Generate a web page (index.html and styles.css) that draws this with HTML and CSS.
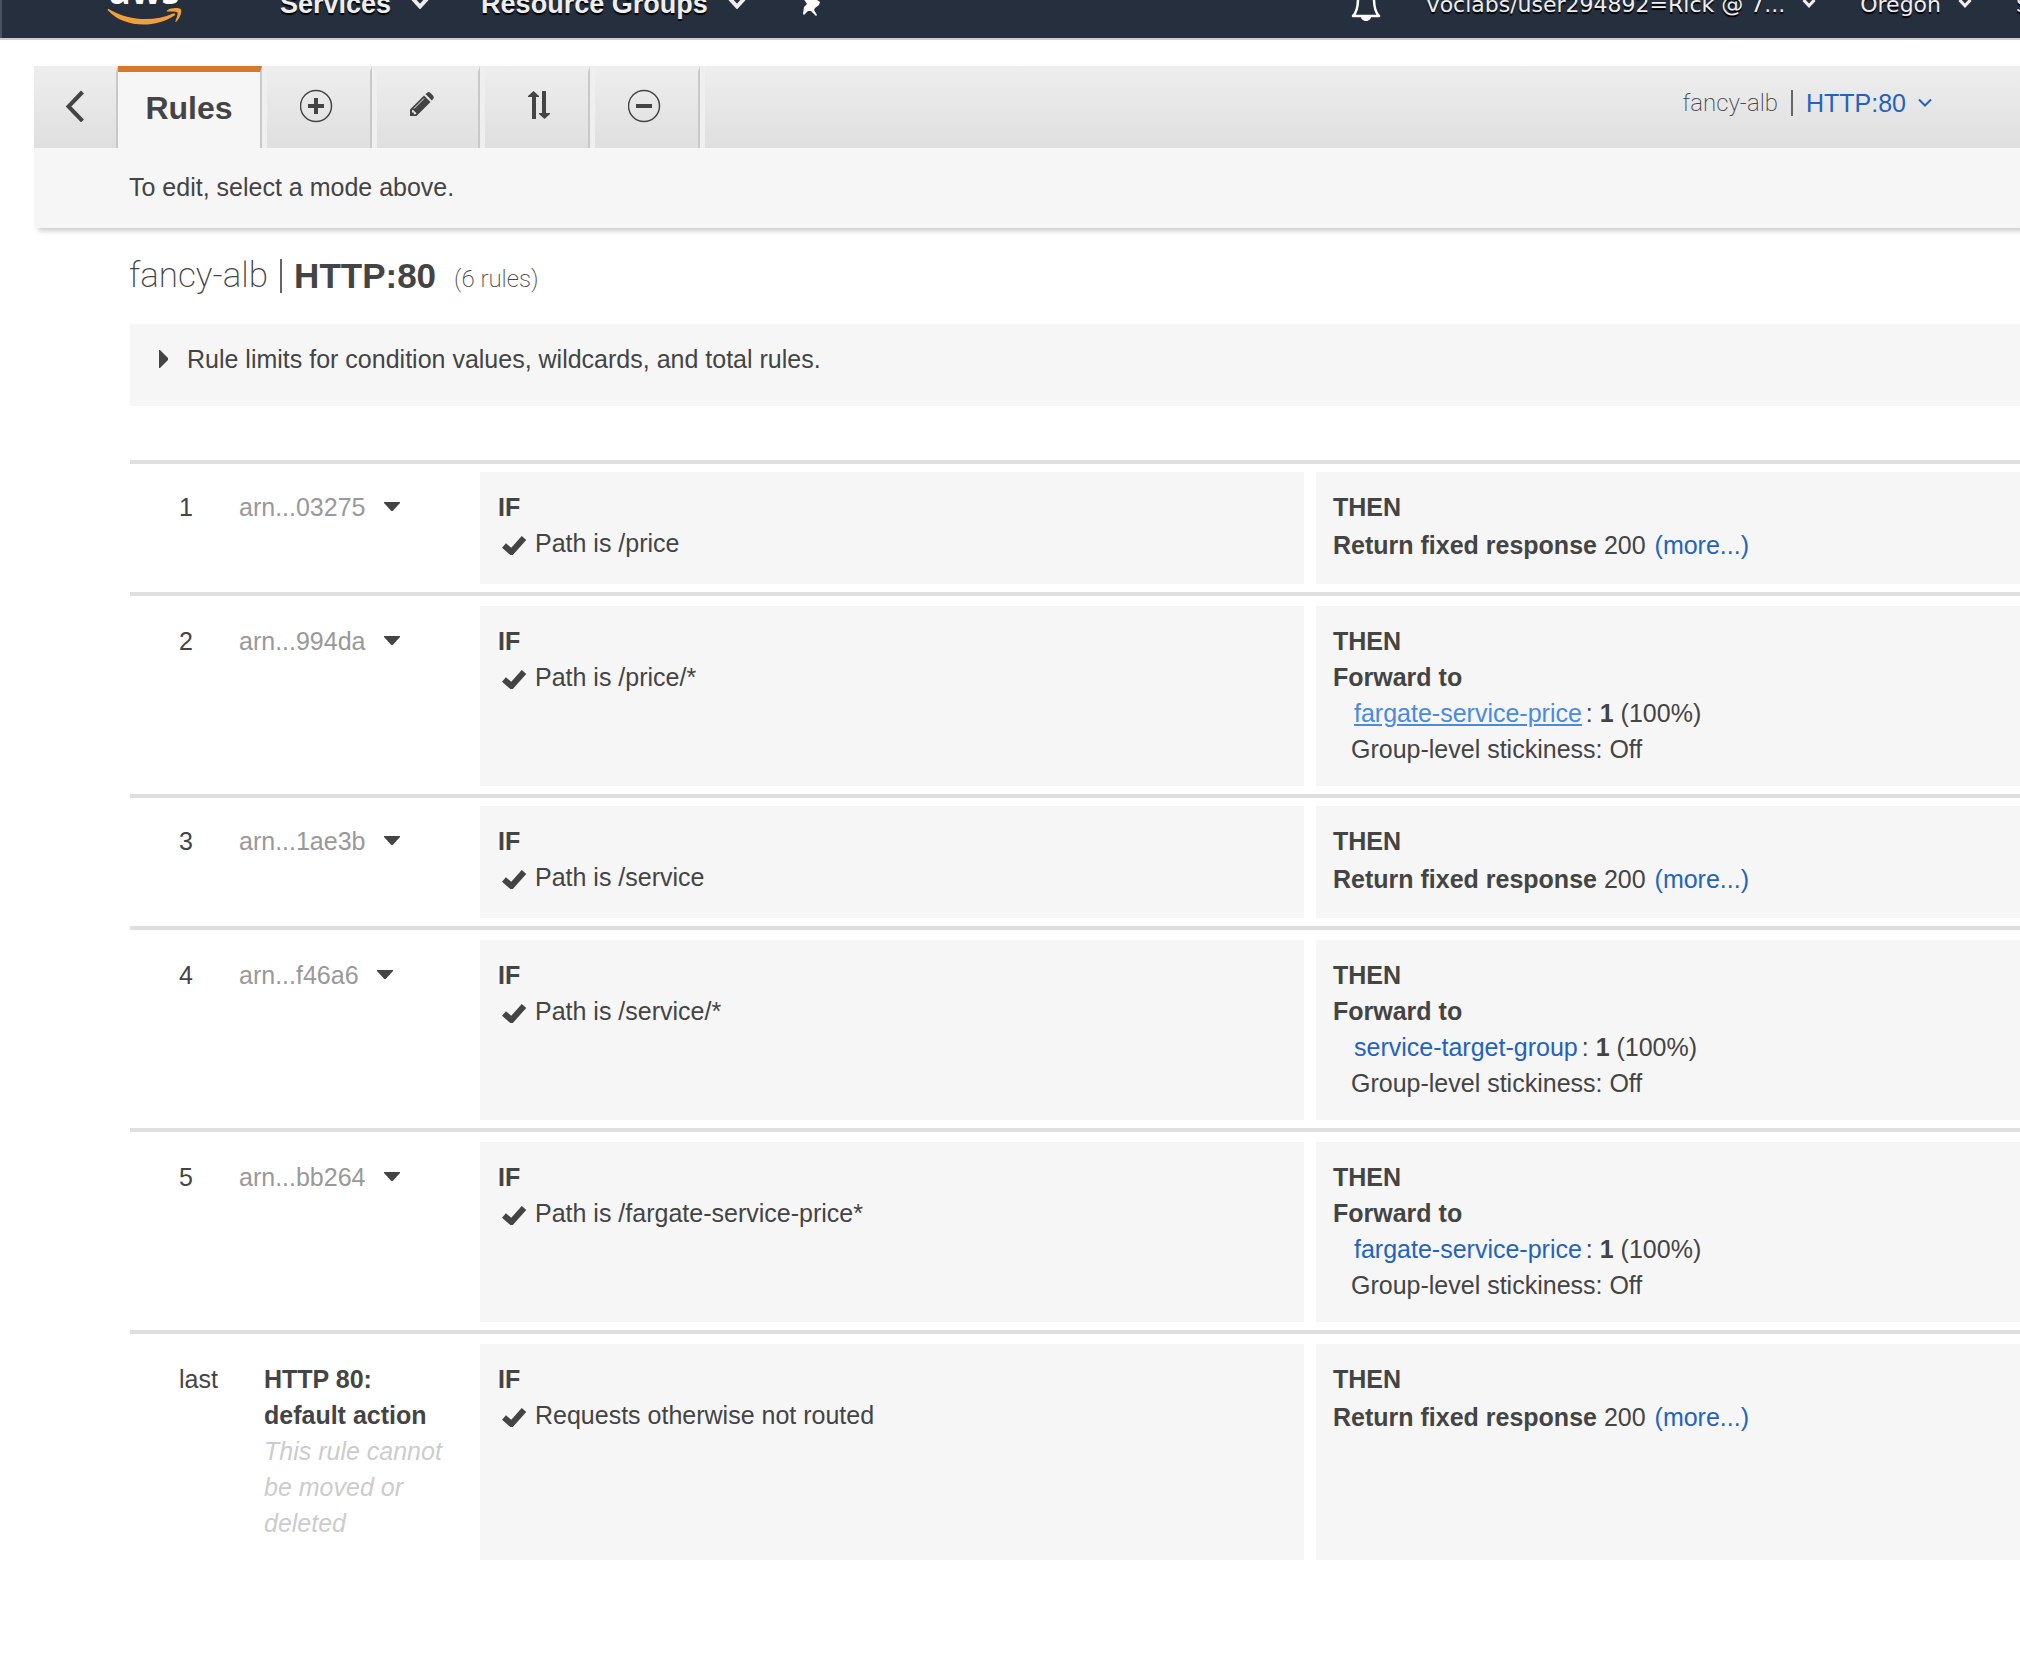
FILE: index.html
```html
<!DOCTYPE html>
<html lang="en">
<head>
<meta charset="utf-8">
<meta name="viewport" content="width=device-width, initial-scale=1">
<title>Rules: fancy-alb HTTP:80</title>
<link rel="stylesheet" href="styles.css">
</head>
<body>
<svg width="0" height="0" class="symbols" aria-hidden="true">
  <symbol id="check" viewBox="0 0 24 20"><path d="M2 10.500 9.500 17 22 3" fill="none" stroke="currentColor" stroke-width="6" stroke-linejoin="miter"/></symbol>
  <symbol id="caret" viewBox="0 0 16 10"><path d="M0 0H16V1L8.700 9H7.300L0 1Z" fill="currentColor"/></symbol>
  <symbol id="nav-caret" viewBox="0 0 18 12"><path d="M2 2 9 9.500 16 2" fill="none" stroke="currentColor" stroke-width="4"/></symbol>
</svg>

<header class="topbar">
  <nav class="topnav" aria-label="Console">
    <a class="logo" href="#" aria-label="AWS home">
      <svg width="76" height="52" viewBox="0 0 76 52">
        <text class="logo-text" x="2" y="31">aws</text>
        <path d="M1 37.500C0 36.500 1 35.500 2.500 36.500C23 48.500 48 48.500 66 40.500C68 40 69 41.500 67.500 42.500C48 55.500 17 55 1 37.500Z" fill="#f19f3b"/>
        <path d="M60 37.500C64 34.500 72 34.500 74 36.500C75 39 73 45 69.500 48.500C68.500 49.500 68 49 68.500 48C70 44.500 71 40.500 70.500 39.500C69 38 64 38.500 61 38.500C59.500 38.500 59 38.300 60 37.500Z" fill="#f19f3b"/>
      </svg>
    </a>
    <button class="nav-item nav-main" type="button">Services <svg width="18" height="12"><use href="#nav-caret"/></svg></button>
    <button class="nav-item nav-main" type="button">Resource Groups <svg width="18" height="12"><use href="#nav-caret"/></svg></button>
    <button class="nav-item nav-pin" type="button" aria-label="Pin shortcuts">
      <svg width="26" height="28" viewBox="0 0 26 28"><path d="M5 3 17 1 16 9 22 13 21 16 17 19 16 21 19 26 18 27 13 22 10 22 6 26 5 25 6 18 9 15 5 9Z" fill="#fff"/></svg>
    </button>
    <div class="nav-right">
      <button class="nav-item nav-bell" type="button" aria-label="Notifications">
        <svg width="30" height="36" viewBox="0 0 30 36"><path d="M2 31C6 27 7 22 7 14C7 7 10 4 15 4S23 7 23 14C23 22 24 27 28 31Z" fill="none" stroke="#fff" stroke-width="2.500" stroke-linejoin="round"/><path d="M10 32H20C20 34 17.500 36 15 36S10 34 10 32Z" fill="#fff"/></svg>
      </button>
      <button class="nav-item nav-user" type="button">voclabs/user294892=Rick @ 7... <svg width="14" height="10"><use href="#nav-caret"/></svg></button>
      <button class="nav-item nav-user" type="button">Oregon <svg width="14" height="10"><use href="#nav-caret"/></svg></button>
      <button class="nav-item nav-user nav-last" type="button">Support</button>
    </div>
  </nav>
</header>

<div class="modebar">
  <div class="tabs">
    <button class="tab tab-back" type="button" aria-label="Back">
      <svg width="20" height="32" viewBox="0 0 20 32"><path d="M17.500 2 3.500 16.500 17.500 31" fill="none" stroke="currentColor" stroke-width="4"/></svg>
    </button>
    <button class="tab tab-active" type="button">Rules</button>
    <button class="tab" type="button" aria-label="Add rule">
      <svg width="38" height="34" viewBox="0 0 38 34"><circle cx="16" cy="17" r="15.500" fill="none" stroke="currentColor" stroke-width="1.500"/><path d="M8 17H24M16 9V25" stroke="currentColor" stroke-width="4"/></svg>
    </button>
    <button class="tab tab-edit" type="button" aria-label="Edit rules">
      <svg width="38" height="34" viewBox="0 0 38 34"><path d="M1 27V20.500L15 6.500 21.500 13 7.500 27Z" fill="currentColor"/><path d="M16.500 5 18.500 3.500Q20 2.500 21.500 4L24 6.500Q25.500 8.500 24.500 9.500L22.800 11.500Z" fill="currentColor"/><path d="M5 19.500 15 9.500" stroke="#eee" stroke-width="1"/><path d="M3 21.500V23.500H4.800V25.200H6.600L7.500 24.300 3.800 20.700Z" fill="#eee"/></svg>
    </button>
    <button class="tab" type="button" aria-label="Reorder rules">
      <svg width="38" height="34" viewBox="0 0 38 34"><path d="M14 30V8H10V7L15.500 2 21 7V8H18V30ZM24 2V24H21V25L26.500 30 32 25V24H28V2Z" fill="currentColor"/></svg>
    </button>
    <button class="tab" type="button" aria-label="Delete rules">
      <svg width="38" height="34" viewBox="0 0 38 34"><circle cx="16" cy="17" r="15.500" fill="none" stroke="currentColor" stroke-width="1.500"/><path d="M8 17H24" stroke="currentColor" stroke-width="4"/></svg>
    </button>
    <div class="listener">
      <span class="thin">fancy-alb</span>
      <span class="bar"></span>
      <a href="#">HTTP:80 <svg width="14" height="10" viewBox="0 0 14 10"><path d="M1 1.500 7 7.500 13 1.500" fill="none" stroke="currentColor" stroke-width="2"/></svg></a>
    </div>
  </div>
  <p class="hint">To edit, select a mode above.</p>
</div>

<main class="content">
  <h1 class="title"><span class="thin">fancy-alb</span><span class="bar"></span><strong>HTTP:80</strong><small class="thin">(6 rules)</small></h1>

  <details class="limits">
    <summary><svg width="10" height="18" viewBox="0 0 10 18"><path d="M0 0H1L9 8V10L1 18H0Z" fill="currentColor"/></svg>Rule limits for condition values, wildcards, and total rules.</summary>
  </details>

  <ol class="rules">
    <li class="rule">
      <div class="id"><span class="num">1</span><button class="arn" type="button">arn...03275 <svg width="16" height="10"><use href="#caret"/></svg></button></div>
      <div class="cell"><b>IF</b><p class="cond"><svg width="24" height="20"><use href="#check"/></svg>Path is /price</p></div>
      <div class="cell then"><b>THEN</b><p class="fixed"><b>Return fixed response</b> 200 <a href="#">(more...)</a></p></div>
    </li>
    <li class="rule forward">
      <div class="id"><span class="num">2</span><button class="arn" type="button">arn...994da <svg width="16" height="10"><use href="#caret"/></svg></button></div>
      <div class="cell"><b>IF</b><p class="cond"><svg width="24" height="20"><use href="#check"/></svg>Path is /price/*</p></div>
      <div class="cell then"><b>THEN</b><p><b>Forward to</b></p><p class="target"><a class="hovered" href="#">fargate-service-price</a><span>: <b>1</b> (100%)</span></p><p class="sticky">Group-level stickiness: Off</p></div>
    </li>
    <li class="rule">
      <div class="id"><span class="num">3</span><button class="arn" type="button">arn...1ae3b <svg width="16" height="10"><use href="#caret"/></svg></button></div>
      <div class="cell"><b>IF</b><p class="cond"><svg width="24" height="20"><use href="#check"/></svg>Path is /service</p></div>
      <div class="cell then"><b>THEN</b><p class="fixed"><b>Return fixed response</b> 200 <a href="#">(more...)</a></p></div>
    </li>
    <li class="rule forward">
      <div class="id"><span class="num">4</span><button class="arn" type="button">arn...f46a6 <svg width="16" height="10"><use href="#caret"/></svg></button></div>
      <div class="cell"><b>IF</b><p class="cond"><svg width="24" height="20"><use href="#check"/></svg>Path is /service/*</p></div>
      <div class="cell then"><b>THEN</b><p><b>Forward to</b></p><p class="target"><a href="#">service-target-group</a><span>: <b>1</b> (100%)</span></p><p class="sticky">Group-level stickiness: Off</p></div>
    </li>
    <li class="rule forward">
      <div class="id"><span class="num">5</span><button class="arn" type="button">arn...bb264 <svg width="16" height="10"><use href="#caret"/></svg></button></div>
      <div class="cell"><b>IF</b><p class="cond"><svg width="24" height="20"><use href="#check"/></svg>Path is /fargate-service-price*</p></div>
      <div class="cell then"><b>THEN</b><p><b>Forward to</b></p><p class="target"><a href="#">fargate-service-price</a><span>: <b>1</b> (100%)</span></p><p class="sticky">Group-level stickiness: Off</p></div>
    </li>
    <li class="rule forward">
      <div class="id"><span class="num">last</span><div class="default"><b>HTTP 80: default action</b><p class="note">This rule cannot be moved or deleted</p></div></div>
      <div class="cell"><b>IF</b><p class="cond"><svg width="24" height="20"><use href="#check"/></svg>Requests otherwise not routed</p></div>
      <div class="cell then"><b>THEN</b><p class="fixed"><b>Return fixed response</b> 200 <a href="#">(more...)</a></p></div>
    </li>
  </ol>
</main>
</body>
</html>
```
FILE: styles.css
```css
* { box-sizing: border-box; }
body {
  margin: 0;
  background: #fff;
  color: #444;
  font: 25px/36px "Liberation Sans", Arial, sans-serif;
  overflow-x: hidden;
}
p { margin: 0; }
a { color: #2463bd; text-decoration: none; }
button {
  margin: 0;
  padding: 0;
  border: 0;
  background: none;
  color: inherit;
  font: inherit;
  cursor: pointer;
}
.symbols { position: absolute; }
.thin { font-family: Roboto, "Liberation Sans", sans-serif; font-weight: 200; color: #444; }

/* Console bar, scrolled partly out of view */
.topbar {
  height: 40px;
  overflow: hidden;
  background: #262f3e;
  border-bottom: 2px solid #ccc;
}
.topnav {
  display: flex;
  align-items: center;
  height: 76px;
  margin-top: -34px;
  padding-left: 105px;
  border-left: 2px solid #4a5361;
  white-space: nowrap;
}
.logo { display: flex; margin-right: 97px; padding-bottom: 10px; }
.logo-text { font: 700 36px "Open Sans", sans-serif; fill: #fff; }
.nav-item {
  display: flex;
  align-items: center;
  color: #eee;
  text-shadow: 0 2px 1px #000;
}
.nav-item svg { margin-bottom: 2px; }
.nav-main { gap: 20px; margin-right: 52px; font-size: 27px; font-weight: 700; }
.nav-right { display: flex; align-items: center; margin-left: auto; }
.nav-bell { margin-right: 46px; }
.nav-user { gap: 17px; margin-right: 44px; font: 22px "DejaVu Sans", sans-serif; }
.nav-last { width: 4px; margin-right: 0; overflow: hidden; }

/* Mode tabs and hint */
.modebar {
  margin: 26px 0 0 34px;
  background: #f6f6f6;
  box-shadow: 4px 3px 5px #ccc;
}
.tabs { display: flex; height: 82px; background: linear-gradient(#eee, #dfdfdf); }
.tab {
  display: flex;
  align-items: center;
  justify-content: center;
  width: 110px;
  padding-bottom: 8px;
  border: solid transparent;
  border-width: 6px 2px 0 5px;
  border-right-color: #c8c8c8;
  border-left-color: #efefef;
}
.tab-back { width: 84px; border-left-width: 0; }
.tab-edit { width: 108px; }
.tab-active {
  width: 144px;
  padding-bottom: 4px;
  border-left-width: 0;
  border-top-color: #d5792b;
  background: #f6f6f6 padding-box;
  font-size: 32px;
  font-weight: 700;
}
.listener {
  display: flex;
  flex: 1;
  align-items: center;
  justify-content: flex-end;
  gap: 13px;
  padding: 0 88px 8px 0;
  border-left: 5px solid #efefef;
}
.listener .thin { font-size: 24px; }
.listener a { display: flex; align-items: center; gap: 12px; }
.bar { width: 2px; height: 26px; background: #666; }
.hint { padding: 21px 95px 23px; }

/* Listener title and rule limits */
.content { padding: 28px 0 80px 129px; }
.title {
  display: flex;
  align-items: center;
  height: 40px;
  margin: 0 0 28px;
  font-size: 35px;
  font-weight: 400;
}
.title .bar { height: 34px; margin: 0 12px; }
.title small { margin-left: 18px; padding-top: 6px; font-size: 24px; }
.limits { height: 82px; margin-left: 1px; background: #f6f6f6; }
.limits summary {
  display: flex;
  align-items: center;
  gap: 18px;
  padding: 17px 29px;
  list-style: none;
  cursor: pointer;
}

/* Rule list */
.rules { margin: 54px 0 0 1px; padding: 0; list-style: none; }
.rule {
  display: grid;
  grid-template-columns: 338px 824fr 704fr;
  column-gap: 12px;
  padding: 8px 0;
  border-top: 4px solid #dfdfdf;
}
.forward { padding-top: 10px; }
.id { display: flex; align-items: flex-start; padding: 17px 0 19px 49px; }
.num { width: 60px; flex: none; }
.arn { display: flex; align-items: center; gap: 18px; color: #999; }
.arn svg { color: #444; }
.default { width: 190px; margin-left: 25px; }
.note { color: #ccc; font-style: italic; }
.cell { padding: 17px 18px 19px; background: #f6f6f6; }
.then { padding-left: 17px; }
.cond { display: flex; align-items: center; gap: 9px; padding-left: 4px; }
.cond svg { margin-top: 4px; }
.fixed { line-height: 40px; }
.fixed a { margin-left: 2px; }
.target { display: flex; gap: 4px; padding-left: 21px; }
.sticky { padding-left: 18px; }
.hovered { color: #4a8ae0; text-decoration: underline; }
```
